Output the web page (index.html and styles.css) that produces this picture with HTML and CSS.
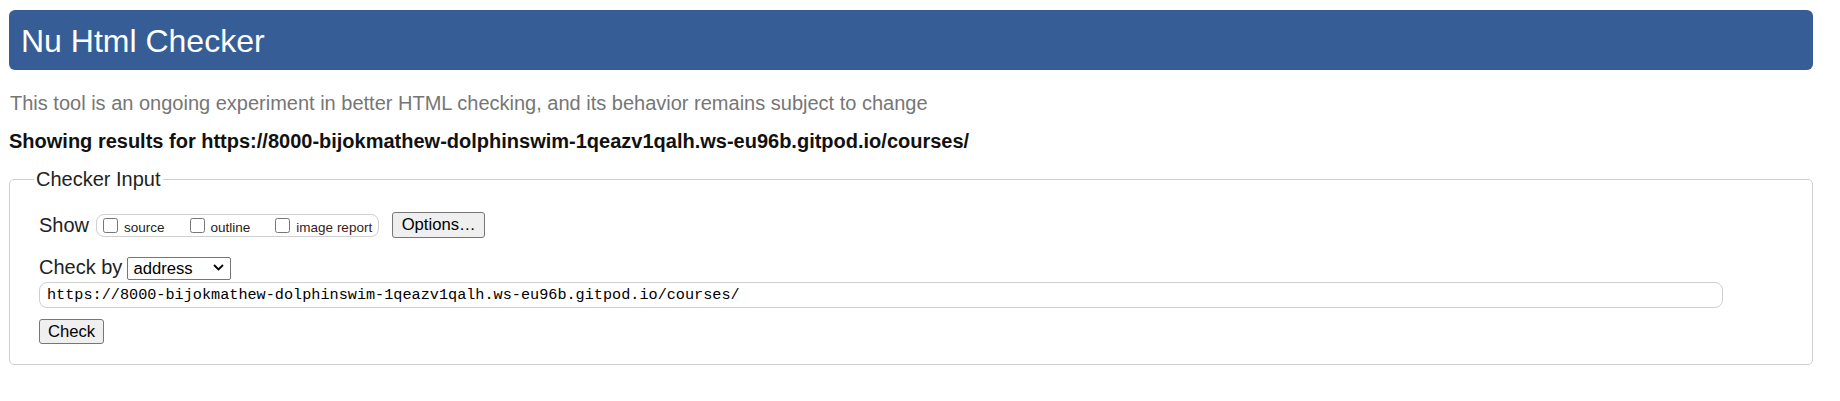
FILE: index.html
```
<!DOCTYPE html>
<html lang="en">
<head>
<meta charset="utf-8">
<title>Nu Html Checker</title>
<link rel="stylesheet" href="styles.css">
</head>
<body>
<h1 class="title">Nu Html Checker</h1>
<p class="intro">This tool is an ongoing experiment in better HTML checking, and its behavior remains subject to change</p>
<p class="showing">Showing results for https://8000-bijokmathew-dolphinswim-1qeazv1qalh.ws-eu96b.gitpod.io/courses/</p>
<form class="form">
  <fieldset class="checker">
    <legend class="checker-legend">Checker Input</legend>
    <div class="inner">
      <div class="row row-show">
        <span class="lbl">Show</span>
        <span class="opts">
          <label class="opt"><input type="checkbox" class="cb"><span>source</span></label>
          <label class="opt"><input type="checkbox" class="cb"><span>outline</span></label>
          <label class="opt opt-last"><input type="checkbox" class="cb"><span>image report</span></label>
        </span>
        <button type="button" class="btn btn-options">Options…</button>
      </div>
      <div class="row row-by">
        <span class="lbl">Check by</span>
        <span class="select-wrap">
          <select class="sel">
            <option>address</option>
            <option>file upload</option>
            <option>text input</option>
          </select>
          <svg class="chev" width="11" height="7" viewBox="0 0 11 7"><path d="M1 1 L5.5 5.5 L10 1" fill="none" stroke="#000" stroke-width="1.8"/></svg>
        </span>
      </div>
      <div class="row row-url">
        <input class="url" type="text" value="https://8000-bijokmathew-dolphinswim-1qeazv1qalh.ws-eu96b.gitpod.io/courses/">
      </div>
      <div class="row row-check">
        <button type="button" class="btn btn-check">Check</button>
      </div>
    </div>
  </fieldset>
</form>
</body>
</html>
```
FILE: styles.css
```
html, body {
  background: #fff;
}
body {
  margin: 0;
  padding: 10px 27px 0 9px;
  font-family: "Liberation Sans", Arial, sans-serif;
  font-size: 20px;
  color: #000;
}
.title {
  margin: 0;
  height: 60px;
  box-sizing: border-box;
  padding: 2px 0 0 12px;
  line-height: 58px;
  font-size: 32px;
  font-weight: normal;
  color: #fff;
  background: #365d95;
  border-radius: 6px;
}
.intro {
  margin: 22px 0 0 1px;
  line-height: 23px;
  color: #767676;
}
.showing {
  margin: 15px 0 0 0;
  line-height: 23px;
  font-weight: bold;
  color: #111;
}
.form {
  margin: 15px 0 0 0;
}
.checker {
  margin: 0;
  padding: 21px 0 20px 24px;
  border: 1px solid #cfcfcf;
  border-radius: 5px;
  min-width: 0;
}
.checker-legend {
  padding: 0 2px;
  line-height: 23px;
  color: #222;
}
.inner {
  padding-left: 5px;
}
.row {
  display: flex;
  align-items: center;
}
.lbl {
  line-height: 23px;
  color: #222;
}
.row-show {
  height: 26px;
}
.opts {
  display: inline-flex;
  align-items: center;
  height: 23px;
  box-sizing: border-box;
  margin-left: 7px;
  padding: 0 6px 0 6px;
  border: 1px solid #cfcfcf;
  border-radius: 8px;
}
.opt {
  display: inline-flex;
  align-items: center;
  font-size: 13.5px;
  color: #222;
  margin-right: 25px;
}
.opt span {
  position: relative;
  top: 2px;
}
.opt-last {
  margin-right: 0;
}
.opt-last span {
  color: #3a1a1a;
}
.cb {
  width: 15px;
  height: 15px;
  margin: 0 6px 0 0;
}
.btn {
  font-family: "Liberation Sans", Arial, sans-serif;
  font-size: 16.67px;
  color: #000;
  background: #efefef;
  border: 1px solid #767676;
  border-radius: 3px;
  box-sizing: border-box;
  padding: 0;
  line-height: 20px;
}
.btn-options {
  margin-left: 13px;
  width: 93px;
  height: 26px;
}
.row-by {
  margin-top: 18px;
}
.select-wrap {
  position: relative;
  display: inline-block;
  margin-left: 5px;
  height: 23px;
}
.sel {
  -webkit-appearance: none;
  appearance: none;
  width: 104px;
  height: 23px;
  box-sizing: border-box;
  margin: 0;
  padding: 0 0 0 5px;
  border: 1px solid #767676;
  border-radius: 2px;
  background: #fff;
  font-family: "Liberation Sans", Arial, sans-serif;
  font-size: 16.67px;
  color: #000;
}
.chev {
  position: absolute;
  right: 7px;
  top: 8px;
  pointer-events: none;
}
.row-url {
  margin-top: 3px;
}
.url {
  width: 1684px;
  height: 26px;
  box-sizing: border-box;
  margin: 0;
  padding: 0 0 0 7px;
  border: 1px solid #cfcfcf;
  border-radius: 8px;
  font-family: "Liberation Mono", "DejaVu Sans Mono", monospace;
  font-size: 15.2px;
  color: #000;
}
.row-check {
  margin-top: 11px;
}
.btn-check {
  width: 65px;
  height: 25px;
}
```
